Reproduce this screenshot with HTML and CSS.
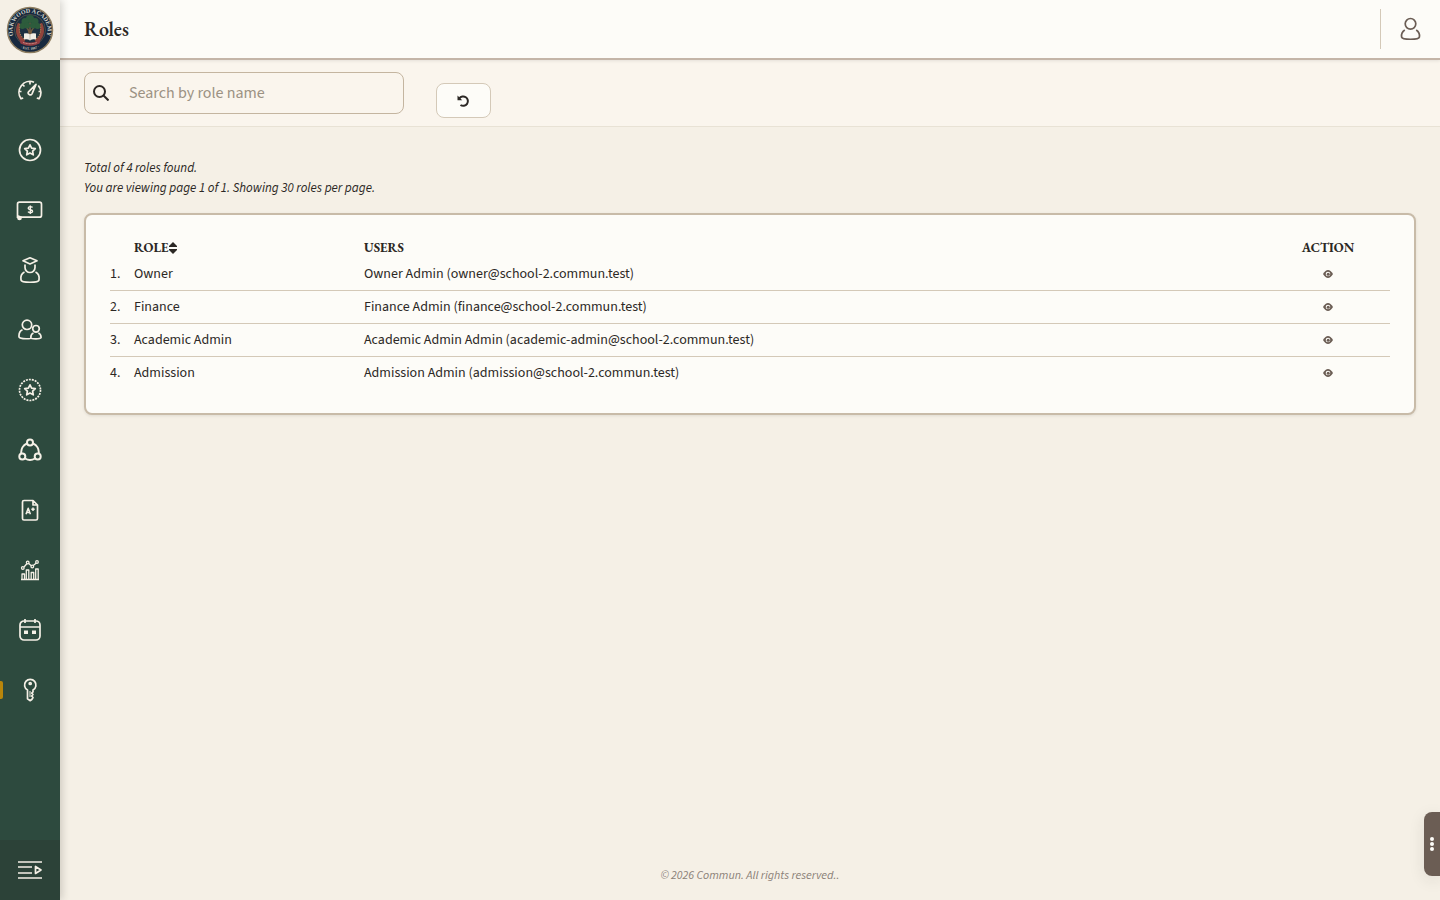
FILE: index.html
```html
<!DOCTYPE html>
<html lang="en">
<head>
    <meta charset="UTF-8">
    <meta name="viewport" content="width=device-width, initial-scale=1.0">
    <title>Roles</title>
    <link rel="stylesheet" href="styles.css">
</head>
<body>
    <aside class="sidebar">
        <a href="#" class="logo" aria-label="Oakwood Academy">
            <svg width="48" height="48" viewBox="0 0 96 96">
                <defs>
                    <path id="arc-top" d="M22 72A35 35 0 1 1 74 72"/>
                    <path id="arc-bottom" d="M27 82A42 42 0 0 0 69 82"/>
                </defs>
                <circle cx="48" cy="48" r="45" fill="#17293f" stroke="#8d7d60" stroke-width="3"/>
                <circle cx="48" cy="48" r="31" fill="#1d3040" stroke="#786b50" stroke-width="1"/>
                <path d="M27 35c-7 14-3 30 10 36M69 35c7 14 3 30-10 36" fill="none" stroke="#91443b" stroke-width="7"/>
                <path d="M28 36c-4 12 0 25 10 31M68 36c4 12 0 25-10 31" fill="none" stroke="#a9804f" stroke-width="2" stroke-dasharray="3 2"/>
                <path d="M46 59c1-7 0-12-6-17M50 59c-1-7 1-12 7-17M48 59V32" fill="none" stroke="#745b3c" stroke-width="3"/>
                <g fill="#2d5c3c">
                    <circle cx="48" cy="26" r="8"/><circle cx="38" cy="31" r="7"/><circle cx="58" cy="31" r="7"/>
                    <circle cx="33" cy="40" r="6"/><circle cx="63" cy="40" r="6"/><circle cx="42" cy="39" r="6"/><circle cx="54" cy="39" r="6"/>
                </g>
                <path d="M36 55q7-2 12 2q5-4 12-2v12q-7-2-12 2q-5-4-12-2z" fill="#f1eee4"/>
                <path d="M48 57v12" stroke="#8e8b80"/>
                <path d="M27 67q21 13 42 0l-2 8q-19 9-38 0z" fill="#913b42"/>
                <path d="M34 73q14 5 28 0" fill="none" stroke="#d0a191" stroke-width="2" stroke-dasharray="2 1"/>
                <text class="seal-name"><textPath href="#arc-top" startOffset="50%">OAKWOOD ACADEMY</textPath></text>
                <text class="seal-year"><textPath href="#arc-bottom" startOffset="50%">· EST. 1987 ·</textPath></text>
            </svg>
        </a>
        <nav class="menu" aria-label="Main menu">
            <a href="#" aria-label="Dashboard">
                <svg viewBox="0 0 24 24"><path d="M5.200 20 3 20.800A11 11 0 0 1 16 4.200M12 3.500v3M20.300 7.500A11 11 0 0 1 21 20.800L18.800 20M1.500 13.500h2M22.500 13.500h-2M5 7l1.500 1.500M10.500 13.800l7.500-7.500-4 9.500a2 2 0 0 1-3.500-2z"/></svg>
            </a>
            <a href="#" aria-label="Programs">
                <svg viewBox="0 0 24 24"><circle cx="12" cy="12" r="10.500"/><path d="m12 6.800 1.600 3.300 3.700.5-2.700 2.600.7 3.600-3.300-1.700-3.300 1.700.7-3.600-2.700-2.600 3.700-.5z"/></svg>
            </a>
            <a href="#" aria-label="Payments">
                <svg class="wide" viewBox="0 0 28 24"><path d="M5 19.200h18.500a2 2 0 0 0 2-2V6.200a2 2 0 0 0-2-2H3.500a2 2 0 0 0-2 2V20"/><path d="M2 18v2a1 1 0 0 0 3 0v-1z" fill="currentColor"/><path d="M16.500 9.500c-1-1.300-4.300-1.200-4.300.7 0 2.100 4.400 1 4.400 3.100 0 1.900-3.600 1.900-4.600.4M14.300 7.500v8.500" stroke-width="1.400"/></svg>
            </a>
            <a href="#" aria-label="Students">
                <svg class="tall" viewBox="0 0 24 28"><path d="m12 1.800 7 3-7 3.200-7-3.200zM7 8.500v3a5 5 0 0 0 10 0v-3M6.500 16c-3 1.500-4 5-3.500 8 .5 3 17.500 3 18 0 .5-3-.5-6.500-3.500-8"/></svg>
            </a>
            <a href="#" aria-label="Families">
                <svg viewBox="0 0 24 24"><circle cx="9" cy="6.800" r="4.700"/><circle cx="18" cy="10.800" r="3.300"/><path d="M4.500 11.800c-2.500 1-3.700 4-3.500 7 .1 2 6.800 2.200 11.500 1.700M15.500 15c-2 .7-2.700 2.500-2.700 4.500 0 1.800 10.300 1.800 10.300 0 0-2-.8-3.800-2.800-4.500"/></svg>
            </a>
            <a href="#" aria-label="Activities">
                <svg viewBox="0 0 24 24"><circle cx="12" cy="12" r="10.500" stroke-dasharray="2 1"/><path d="m12 6.800 1.600 3.300 3.700.5-2.700 2.600.7 3.600-3.300-1.700-3.300 1.700.7-3.600-2.700-2.600 3.700-.5z"/></svg>
            </a>
            <a href="#" aria-label="Groups">
                <svg viewBox="0 0 24 24"><g stroke-width="2"><circle cx="12" cy="4.500" r="3"/><circle cx="4.300" cy="18.500" r="3"/><circle cx="19.700" cy="18.500" r="3"/><path d="M9 5.500a9.500 9.500 0 0 0-5.700 10M15 5.500a9.500 9.500 0 0 1 5.700 10M7 20.500a9.500 9.500 0 0 0 10 0"/></g></svg>
            </a>
            <a href="#" aria-label="Grades">
                <svg viewBox="0 0 24 24"><path d="M15 2.500H6A1.500 1.500 0 0 0 4.500 4v16.500A1.500 1.500 0 0 0 6 22h12a1.500 1.500 0 0 0 1.500-1.500V7zV7h4.500"/><path d="m8 16.200 2.200-6 2.200 6M8.700 14.500h3M13.300 11.200h3.400M15 9.500v3.400" stroke-width="1.500"/></svg>
            </a>
            <a href="#" aria-label="Reports">
                <svg viewBox="0 0 24 24"><g stroke-width="1.300"><path d="M4 21.500V16h2.500v5.500zM8.300 21.500v-9.500h2.500v9.500zM13.200 21.500v-7h2.500v7zM17.700 21.500V11h2.500v10.500zM3 21.500h18"/><circle cx="4.800" cy="10" r="1.300"/><circle cx="9.700" cy="4.500" r="1.300"/><circle cx="14.300" cy="8.500" r="1.300"/><circle cx="19" cy="4" r="1.300"/><path d="m6 9 3-3.500M10.700 5.500l2.600 2.200M15.300 7.500l3-2.600"/></g></svg>
            </a>
            <a href="#" aria-label="Calendar">
                <svg viewBox="0 0 24 24"><rect x="2" y="3" width="20" height="19" rx="4"/><path d="M2 9h20M7 1v4M17 1v4"/><path d="M6 12.500h4V16H6zM14 12.500h4V16H14z" fill="currentColor" stroke="none"/></svg>
            </a>
            <a href="#" class="active" aria-label="Roles" aria-current="page">
                <svg viewBox="0 0 24 24"><path d="M9.500 12a5.700 5.700 0 1 1 5.500 0v2l-1.300 1.200 1.300 1.300-1.300 1.500 1.300 1.500-1.200 2-1.500 1.200-2.800-2z"/><circle cx="12.200" cy="5.500" r="1"/><path d="M12 13v6" stroke-width="1"/></svg>
            </a>
        </nav>
        <button type="button" class="expand" aria-label="Expand menu">
            <svg viewBox="0 0 24 24"><path d="M0 4h24M0 9h14M0 15h14M0 20h24M17.500 8.500v7L23 12z"/></svg>
        </button>
    </aside>

    <div class="page">
        <header class="topbar">
            <h1>Roles</h1>
            <button type="button" class="account" aria-label="Account">
                <svg width="24" height="24" viewBox="0 0 24 24"><circle cx="11.500" cy="6.800" r="5.300"/><path d="M5.800 13c-2.300 1.500-3.600 4.500-3.200 7 .5 3 17.300 3 17.800 0 .4-2.500-.9-5.500-3.200-7"/></svg>
            </button>
        </header>

        <form class="filters">
            <div class="search">
                <label for="search" aria-label="Search by role name">
                    <svg width="16" height="16" viewBox="0 0 16 16"><circle cx="6.500" cy="6.500" r="5.500"/><path d="m10.500 10.500 5 5"/></svg>
                </label>
                <input type="text" id="search" placeholder="Search by role name">
            </div>
            <button type="reset" class="reset" aria-label="Reset">
                <svg width="14" height="14" viewBox="0 0 14 14"><path d="M2.300 4.500A4.700 4.700 0 1 1 3.500 11"/><path d="M.5 1.500v4.700h4.700z" fill="currentColor" stroke="none"/></svg>
            </button>
        </form>

        <main>
            <p class="summary">Total of 4 roles found.<br>You are viewing page 1 of 1. Showing 30 roles per page.</p>
            <section class="card">
                <table>
                    <thead>
                        <tr>
                            <th class="number"></th>
                            <th class="role"><button type="button">ROLE<svg width="8" height="12" viewBox="0 0 8 12"><path d="M4 0 8 4v1H0V4zM0 7h8v1l-4 4-4-4z"/></svg></button></th>
                            <th>USERS</th>
                            <th class="action">ACTION</th>
                        </tr>
                    </thead>
                    <tbody>
                        <tr>
                            <td>1.</td>
                            <td>Owner</td>
                            <td>Owner Admin (owner@school-2.commun.test)</td>
                            <td class="action"><a href="#" aria-label="View Owner"><svg width="10" height="8" viewBox="0 0 10 8"><path d="M0 4q5-8 10 0-5 8-10 0z"/><circle cx="5" cy="4" r="2.300"/><circle class="pupil" cx="5.200" cy="4.200" r="1.500"/></svg></a></td>
                        </tr>
                        <tr>
                            <td>2.</td>
                            <td>Finance</td>
                            <td>Finance Admin (finance@school-2.commun.test)</td>
                            <td class="action"><a href="#" aria-label="View Finance"><svg width="10" height="8" viewBox="0 0 10 8"><path d="M0 4q5-8 10 0-5 8-10 0z"/><circle cx="5" cy="4" r="2.300"/><circle class="pupil" cx="5.200" cy="4.200" r="1.500"/></svg></a></td>
                        </tr>
                        <tr>
                            <td>3.</td>
                            <td>Academic Admin</td>
                            <td>Academic Admin Admin (academic-admin@school-2.commun.test)</td>
                            <td class="action"><a href="#" aria-label="View Academic Admin"><svg width="10" height="8" viewBox="0 0 10 8"><path d="M0 4q5-8 10 0-5 8-10 0z"/><circle cx="5" cy="4" r="2.300"/><circle class="pupil" cx="5.200" cy="4.200" r="1.500"/></svg></a></td>
                        </tr>
                        <tr>
                            <td>4.</td>
                            <td>Admission</td>
                            <td>Admission Admin (admission@school-2.commun.test)</td>
                            <td class="action"><a href="#" aria-label="View Admission"><svg width="10" height="8" viewBox="0 0 10 8"><path d="M0 4q5-8 10 0-5 8-10 0z"/><circle cx="5" cy="4" r="2.300"/><circle class="pupil" cx="5.200" cy="4.200" r="1.500"/></svg></a></td>
                        </tr>
                    </tbody>
                </table>
            </section>
        </main>

        <footer>© 2026 Commun. All rights reserved..</footer>
    </div>

    <button type="button" class="drawer" aria-label="More options">
        <svg width="4" height="14" viewBox="0 0 4 14"><circle cx="2" cy="2" r="2"/><circle cx="2" cy="7" r="2"/><circle cx="2" cy="12" r="2"/></svg>
    </button>
</body>
</html>
```
FILE: styles.css
```css
* {
    box-sizing: border-box;
}
body {
    display: flex;
    min-height: 100vh;
    margin: 0;
    background-color: #f5f0e6;
    color: #2c2825;
    font-family: "Source Sans 3", "Source Sans Pro", "Noto Sans CJK SC", sans-serif;
    font-size: 14px;
    line-height: 20px;
}
button, input {
    font: inherit;
    color: inherit;
}
button {
    padding: 0;
    border: none;
    background: none;
    cursor: pointer;
}
svg {
    display: block;
}

/* Sidebar */
.sidebar {
    display: flex;
    flex-direction: column;
    flex: none;
    width: 60px;
    background-color: #2d4a3e;
    color: #f5f0e6;
    box-shadow: 2px 0 8px rgba(44, 40, 37, 0.2);
    z-index: 1;
}
.logo {
    display: flex;
    align-items: center;
    justify-content: center;
    height: 60px;
    background-color: #f5f0e6;
}
.seal-name, .seal-year {
    fill: #d5d5ca;
    font-family: "Liberation Serif", serif;
    font-weight: bold;
    text-anchor: middle;
}
.seal-name {
    font-size: 12px;
}
.seal-year {
    font-size: 7px;
}
.menu {
    flex: 1;
}
.menu a, .expand {
    display: flex;
    align-items: center;
    justify-content: center;
    width: 100%;
    height: 60px;
    color: #f5f0e6;
}
.menu svg, .expand svg {
    width: 24px;
    height: 24px;
    fill: none;
    stroke: currentColor;
    stroke-width: 1.7;
    stroke-linejoin: round;
}
.menu svg.wide {
    width: 28px;
}
.menu svg.tall {
    height: 28px;
}
.menu .active {
    position: relative;
}
.menu .active::before {
    content: "";
    position: absolute;
    left: 0;
    width: 3px;
    height: 18px;
    border-radius: 0 2px 2px 0;
    background-color: #b8860b;
}
.expand {
    background-color: #2c4238;
}

/* Top bar and filters */
.page {
    display: flex;
    flex-direction: column;
    flex: 1;
    min-width: 0;
}
.topbar {
    display: flex;
    align-items: center;
    justify-content: space-between;
    height: 60px;
    padding-left: 24px;
    border-bottom: 2px solid #c4b5a8;
    background-color: #fdfcf8;
    box-shadow: 0 1px 3px rgba(44, 40, 37, 0.1);
    z-index: 0;
}
h1 {
    margin: 0;
    font-family: "EB Garamond", "Liberation Serif", serif;
    font-size: 20px;
    font-weight: 600;
    line-height: 28px;
}
.account {
    display: flex;
    align-items: center;
    justify-content: center;
    width: 60px;
    height: 40px;
    border-left: 1px solid #d4c9b8;
    color: #6b5d54;
}
.account svg, .search svg, .reset svg {
    fill: none;
    stroke: currentColor;
    stroke-width: 2;
}
.account svg {
    stroke-width: 1.7;
}
.filters {
    display: flex;
    align-items: flex-end;
    gap: 32px;
    padding: 12px 24px 8px;
    border-bottom: 1px solid #e8e2d5;
    background-color: #faf5ed;
}
.search {
    display: flex;
    align-items: center;
    width: 320px;
    height: 42px;
    margin-bottom: 4px;
    border: 1px solid #c4b5a0;
    border-radius: 8px;
}
.search label {
    padding: 0 8px;
}
.search input {
    flex: 1;
    min-width: 0;
    padding: 0 12px;
    border: none;
    outline: none;
    background: none;
    font-size: 16px;
}
.search input::placeholder {
    color: #9c9283;
}
.reset {
    display: flex;
    align-items: center;
    justify-content: center;
    width: 55px;
    height: 35px;
    border: 1px solid #d4c9b8;
    border-radius: 8px;
    background-color: #fdfcf8;
}

/* Roles */
main {
    flex: 1;
    padding: 31px 24px;
}
.summary {
    margin: 0 0 15px;
    font-size: 13px;
    font-style: italic;
}
.card {
    padding: 24px;
    border: 2px solid #c8bba8;
    border-radius: 8px;
    background-color: #fdfcf8;
    box-shadow: 0 1px 3px rgba(44, 40, 37, 0.1);
}
table {
    width: 100%;
    border-collapse: separate;
    border-spacing: 0;
    table-layout: fixed;
}
th {
    height: 19px;
    padding: 0;
    font-family: "EB Garamond", "Liberation Serif", serif;
    font-size: 13px;
    font-weight: bold;
    line-height: 17px;
    text-align: left;
    vertical-align: top;
}
th button {
    display: flex;
    align-items: center;
}
th svg {
    margin-left: 1px;
    fill: currentColor;
}
.number {
    width: 24px;
}
.role {
    width: 230px;
}
td {
    height: 33px;
    padding: 0;
    border-bottom: 1px solid #d4c9b8;
}
tr:last-child td {
    height: 32px;
    border-bottom: none;
}
.action {
    width: 124px;
    text-align: center;
}
td a {
    display: flex;
    justify-content: center;
    color: #6b5d54;
}
td svg {
    fill: currentColor;
}
td circle {
    fill: #fdfcf8;
}
td .pupil {
    fill: currentColor;
}
footer {
    padding: 16px 16px 14px;
    color: #8b8178;
    font-size: 12px;
    font-style: italic;
    text-align: center;
}
.drawer {
    position: fixed;
    right: 0;
    bottom: 24px;
    display: flex;
    align-items: center;
    justify-content: center;
    width: 16px;
    height: 64px;
    border-radius: 8px 0 0 8px;
    background-color: #6b5d54;
    box-shadow: 0 4px 16px rgba(44, 40, 37, 0.1);
}
.drawer svg {
    fill: #fdfcf8;
}
```
